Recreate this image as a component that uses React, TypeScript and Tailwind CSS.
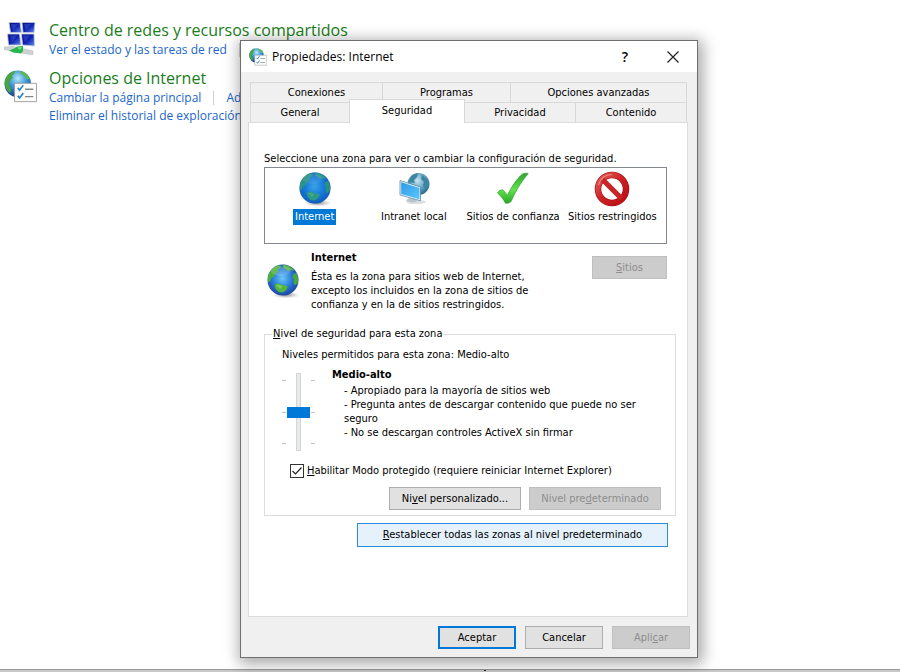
import { useState } from "react";
import type { ReactNode } from "react";
import clsx from "clsx";

type Zone = { id: string; label: string; icon: ReactNode };

const topTabs = [
  { label: "Conexiones", width: "w-[132px]" },
  { label: "Programas", width: "w-32" },
  { label: "Opciones avanzadas", width: "flex-1" },
];

const zones: Zone[] = [
  { id: "internet", label: "Internet", icon: <GlobeIcon id="zone" className="size-9" selected /> },
  { id: "intranet", label: "Intranet local", icon: <IntranetIcon /> },
  { id: "trusted", label: "Sitios de confianza", icon: <CheckIcon /> },
  { id: "restricted", label: "Sitios restringidos", icon: <ForbiddenIcon /> },
];

const levels = [
  "- Apropiado para la mayoría de sitios web",
  "- Pregunta antes de descargar contenido que puede no ser seguro",
  "- No se descargan controles ActiveX sin firmar",
];

function App() {
  return (
    <main className="relative flex min-h-screen flex-col overflow-hidden bg-white">
      <ControlPanel />
      <PropertiesDialog />
      <div className="mt-auto h-[3px] border-t border-[#999] bg-[#c8c8c8] pl-[484px]">
        <div className="h-px w-0.5 bg-[#333]" />
      </div>
    </main>
  );
}

function ControlPanel() {
  return (
    <section className="flex flex-col gap-[9px] pt-5 pl-1 font-['Open_Sans','Noto_Sans',sans-serif] text-[12px] leading-[18px] whitespace-nowrap text-[#1a66cc]">
      <div className="flex gap-3">
        <NetworkIcon />
        <div>
          <h2 className="text-[16px] leading-[21px] text-[#1a7d1a]">
            <a href="#">Centro de redes y recursos compartidos</a>
          </h2>
          <div className="flex items-center gap-3">
            <a href="#">Ver el estado y las tareas de red</a>
            <span className="h-3.5 w-px bg-[#d0d0d0]" />
          </div>
        </div>
      </div>
      <div className="flex gap-3">
        <OptionsIcon className="mt-0.5 size-[33px]" id="panel" />
        <div>
          <h2 className="text-[16px] leading-[21px] text-[#1a7d1a]">
            <a href="#">Opciones de Internet</a>
          </h2>
          <div className="flex items-center gap-3">
            <a href="#">Cambiar la página principal</a>
            <span className="h-3.5 w-px bg-[#d0d0d0]" />
            <a href="#">Admin</a>
          </div>
          <a href="#">Eliminar el historial de exploración</a>
        </div>
      </div>
    </section>
  );
}

function PropertiesDialog() {
  return (
    <div
      role="dialog"
      aria-labelledby="dialog-title"
      className="absolute top-10 left-60 w-full max-w-[458px] border border-[#6e6e6e] bg-[#f0f0f0] font-['DejaVu_Sans_Condensed','DejaVu_Sans',sans-serif] text-[11px] leading-[14px] text-black shadow-[2px_3px_14px_3px_rgba(0,0,0,0.34)]"
    >
      <header className="flex h-[31px] items-center bg-white pl-2">
        <OptionsIcon className="size-[18px]" id="title" />
        <h1 id="dialog-title" className="ml-[5px] flex-1 font-['Open_Sans','Noto_Sans',sans-serif] text-[12px]">
          Propiedades: Internet
        </h1>
        <button aria-label="Ayuda" className="w-12 font-['Open_Sans',sans-serif] text-[14px] font-semibold">
          ?
        </button>
        <button aria-label="Cerrar" className="flex w-12 justify-center">
          <svg viewBox="0 0 12 12" className="size-3" stroke="#222" strokeWidth="1.2">
            <path d="M.5.5l11 11M11.5.5l-11 11" />
          </svg>
        </button>
      </header>
      <div className="pt-2.5 pr-[9px] pb-2 pl-[7px]">
        <Tabs />
        <SecurityPanel />
        <footer className="mt-[9px] -mr-0.5 flex justify-end gap-[9px]">
          <DialogButton className="w-[78px] outline-2 -outline-offset-2 outline-[#0078d7]">Aceptar</DialogButton>
          <DialogButton className="w-[78px]">Cancelar</DialogButton>
          <DialogButton className="w-[78px]" disabled>
            Apli<u>c</u>ar
          </DialogButton>
        </footer>
      </div>
    </div>
  );
}

function Tabs() {
  return (
    <div role="tablist" className="pr-px pl-0.5">
      <div className="flex h-5 border-t border-l border-[#d9d9d9]">
        {topTabs.map(({ label, width }) => (
          <button key={label} role="tab" className={clsx("border-r border-[#d9d9d9]", width)}>
            {label}
          </button>
        ))}
      </div>
      <div className="flex h-5">
        <button role="tab" className="w-[99px] border-t border-l border-[#d9d9d9]">
          General
        </button>
        <button
          role="tab"
          aria-selected="true"
          className="relative -mt-[3px] -mb-px w-[116px] border-x border-t border-[#d9d9d9] bg-white pb-0.5"
        >
          Seguridad
        </button>
        <button role="tab" className="w-[111px] border-t border-r border-[#d9d9d9]">
          Privacidad
        </button>
        <button role="tab" className="flex-1 border-t border-r border-[#d9d9d9]">
          Contenido
        </button>
      </div>
    </div>
  );
}

function SecurityPanel() {
  const [zone, setZone] = useState("internet");
  const [level, setLevel] = useState(1);
  const [protectedMode, setProtectedMode] = useState(true);

  return (
    <div role="tabpanel" className="border border-[#dcdcdc] bg-white pt-7 pr-[11px] pb-[69px] pl-[15px]">
      <p className="leading-4">Seleccione una zona para ver o cambiar la configuración de seguridad.</p>
      <div className="mr-[9px] flex h-[77px] items-start border border-[#828790] pr-1">
        {zones.map(({ id, label, icon }) => (
          <button
            key={id}
            onClick={() => setZone(id)}
            className="flex flex-1 basis-0 flex-col items-center pt-[3px] whitespace-nowrap"
          >
            {icon}
            <span className={clsx("mt-0.5 px-0.5 leading-4", zone === id && "bg-[#0078d7] text-white")}>{label}</span>
          </button>
        ))}
      </div>

      <div className="mt-[7px] mr-[9px] flex">
        <GlobeIcon id="current" className="mt-3 ml-px size-9" />
        <div className="ml-2.5 flex-1">
          <h2 className="font-bold">Internet</h2>
          <p className="mt-[5px] max-w-60">
            Ésta es la zona para sitios web de Internet, excepto los incluidos en la zona de sitios de confianza y en
            la de sitios restringidos.
          </p>
        </div>
        <DialogButton className="mt-[5px] w-[75px] self-start" disabled>
          <u>S</u>itios
        </DialogButton>
      </div>

      <fieldset className="mt-[15px] border border-[#dcdcdc] pr-3.5 pb-[5px] pl-[17px]">
        <legend className="-ml-2.5 px-px">
          <u>N</u>ivel de seguridad para esta zona
        </legend>
        <p className="mt-[7px]">Niveles permitidos para esta zona: Medio-alto</p>
        <div className="mt-1.5 flex">
          <div className="mt-[5px] flex h-[78px] w-[33px] justify-between">
            <Ticks />
            <input
              type="range"
              aria-label="Nivel de seguridad"
              min={0}
              max={2}
              value={level}
              onChange={(e) => setLevel(Number(e.currentTarget.value))}
              className="h-[78px] w-[23px] appearance-none bg-transparent [direction:rtl] [writing-mode:vertical-lr] [&::-webkit-slider-runnable-track]:w-[5px] [&::-webkit-slider-runnable-track]:border [&::-webkit-slider-runnable-track]:border-[#d6d6d6] [&::-webkit-slider-runnable-track]:bg-[#e7eaea] [&::-webkit-slider-thumb]:-ml-[10px] [&::-webkit-slider-thumb]:h-[11px] [&::-webkit-slider-thumb]:w-[23px] [&::-webkit-slider-thumb]:appearance-none [&::-webkit-slider-thumb]:bg-[#0078d7]"
            />
            <Ticks />
          </div>
          <div className="ml-[17px] flex-1">
            <h3 className="font-bold">Medio-alto</h3>
            <ul className="mt-[2px] ml-3">
              {levels.map((text) => (
                <li key={text}>{text}</li>
              ))}
            </ul>
          </div>
        </div>
        <div className="mt-[13px] ml-2 flex items-center gap-[3px]">
          <span className="relative flex size-3.5">
            <input
              id="protected-mode"
              type="checkbox"
              checked={protectedMode}
              onChange={(e) => setProtectedMode(e.currentTarget.checked)}
              className="peer size-3.5 appearance-none border border-[#333] bg-white"
            />
            <svg
              viewBox="0 0 14 14"
              className="pointer-events-none absolute inset-0 hidden size-3.5 peer-checked:block"
              fill="none"
              stroke="#222"
              strokeWidth="1.2"
            >
              <path d="M2.500 7l3 3L11.500 3.500" />
            </svg>
          </span>
          <label htmlFor="protected-mode">
            <u>H</u>abilitar Modo protegido (requiere reiniciar Internet Explorer)
          </label>
        </div>
        <div className="mt-[9px] flex justify-end gap-2">
          <DialogButton className="w-[132px]">
            Ni<u>v</u>el personalizado...
          </DialogButton>
          <DialogButton className="w-[132px]" disabled>
            Nivel pre<u>d</u>eterminado
          </DialogButton>
        </div>
      </fieldset>
      <div className="mt-[7px] mr-2 flex justify-end">
        <button className="h-6 w-[311px] border border-[#2f8ad8] bg-[#e5f1fb]">
          <u>R</u>establecer todas las zonas al nivel predeterminado
        </button>
      </div>
    </div>
  );
}

function Ticks() {
  return (
    <div className="flex flex-col justify-between py-[7px]">
      <span className="h-px w-1 bg-[#c4c4c4]" />
      <span className="h-px w-1 bg-[#c4c4c4]" />
      <span className="h-px w-1 bg-[#c4c4c4]" />
    </div>
  );
}

function DialogButton({
  children,
  className,
  disabled,
}: {
  children: ReactNode;
  className?: string;
  disabled?: boolean;
}) {
  return (
    <button
      disabled={disabled}
      className={clsx(
        "h-[23px] border whitespace-nowrap",
        disabled ? "border-[#bfbfbf] bg-[#cccccc] text-[#8e8e8e]" : "border-[#adadad] bg-[#e1e1e1]",
        className,
      )}
    >
      {children}
    </button>
  );
}

function GlobeIcon({ id, className, selected }: { id: string; className?: string; selected?: boolean }) {
  return (
    <svg viewBox="0 0 36 36" className={className}>
      <defs>
        <radialGradient id={`sea-${id}`} cx=".48" cy=".45" r=".58">
          <stop offset="0" stopColor="#6cc6f5" />
          <stop offset=".5" stopColor="#2b80dc" />
          <stop offset="1" stopColor="#1a3f9e" />
        </radialGradient>
        <radialGradient id={`shade-${id}`}>
          <stop offset="0" stopColor="#555" stopOpacity=".7" />
          <stop offset="1" stopColor="#999" stopOpacity="0" />
        </radialGradient>
      </defs>
      <ellipse cx="21" cy="32" rx="14" ry="3.5" fill={`url(#shade-${id})`} />
      <circle cx="18" cy="17" r="15.5" fill={`url(#sea-${id})`} />
      <path
        d="M3 14C4 8.500 8 4 13 2.300l3 .7-1 2.500-2.500 1 1 2.500-3.500 2-1 3-2.500.5-1 3.500-2.500 1.500z"
        fill="#4cae3c"
      />
      <path d="M18 1.500l6 1.500 4 3 .5 2-3.500-1-2 1.500-2-2.500-2.500-1z" fill="#56b548" />
      <path d="M28.500 11l3-1 1.700 5-.4 5-2.800 2.500-1.500-3 .5-3-1.500-2.500z" fill="#48a83c" />
      <path d="M9.500 21.500l4-1.300 4 1.800 5.300 1.300-1.200 3.500-4 2.700-4-.5-3-3z" fill="#52b53e" />
      <path d="M11 22l3-.3 3.500 1.800-2.500 2.500z" fill="#9ade66" opacity=".6" />
      <ellipse cx="16" cy="8" rx="10" ry="5" fill="#fff" opacity=".16" />
      {selected && <circle cx="18" cy="17" r="15.5" fill="#0078d7" opacity=".45" />}
    </svg>
  );
}

function OptionsIcon({ id, className }: { id: string; className?: string }) {
  return (
    <svg viewBox="0 0 36 36" className={className}>
      <defs>
        <radialGradient id={`opt-${id}`} cx=".5" cy=".3" r=".65">
          <stop offset="0" stopColor="#b5e8fb" />
          <stop offset=".5" stopColor="#3f98da" />
          <stop offset="1" stopColor="#1d4c9c" />
        </radialGradient>
      </defs>
      <circle cx="15" cy="15" r="14.5" fill={`url(#opt-${id})`} />
      <path d="M.8 14C1.500 7 6 1.800 12 .8L11 4 8.500 6l1 2.500L6.500 12l-1 4 2 4-.5 5.500C3 23 .8 18 .8 14z" fill="#4aa53e" />
      <path d="M17 .8c5 .7 9 3.700 11.500 8.700l-4 .5-2-4-4-1.500z" fill="#5dbb4a" />
      <path d="M11.500 14.500h24v20h-24z" fill="#fdfdfd" stroke="#9a9a9a" />
      <path d="M15 19.500l2 2.500 4-5.500M15 28l2 2.500 4-5.500" fill="none" stroke="#2384bd" strokeWidth="1.8" />
      <path d="M23 21h9M23 29h9" stroke="#888" strokeWidth="1.4" />
    </svg>
  );
}

function NetworkIcon() {
  return (
    <svg viewBox="0 0 33 36" className="h-9 w-[33px]">
      <defs>
        <linearGradient id="screen" x1="0" y1="0" x2="1" y2="1">
          <stop offset="0" stopColor="#0a0f86" />
          <stop offset=".5" stopColor="#1020b0" />
          <stop offset="1" stopColor="#5f8eee" />
        </linearGradient>
      </defs>
      <g fill="url(#screen)" stroke="#c2cad8" strokeWidth=".8">
        <path d="M5 2.500h11l1.500 10h-11z" />
        <path d="M18 2.500h13l-1 10H19z" />
        <path d="M3.500 14h12l1.500 11H4.500z" />
        <path d="M17.500 14h12.500l.5 12-12-1z" />
      </g>
      <path d="M7 4l7 0-5 7zM20 4l7 0-5 7zM6 15.500h7l-5 7zM19 15.500h7l-5 7z" fill="#3c60d8" opacity=".45" />
      <path d="M0 27l9-.5 20 4.500v3.500l-6-.5L0 29.500z" fill="#cfd3d3" stroke="#adb3b3" strokeWidth=".5" />
      <path d="M5 30.500l6-2.500 2-1.500 6-.5v5l-2 2.500-8-1z" fill="#27b64b" />
      <path d="M13 27.500l5-.5-2 3z" fill="#7be08a" />
    </svg>
  );
}

function IntranetIcon() {
  return (
    <svg viewBox="0 0 36 36" className="size-9">
      <defs>
        <radialGradient id="intranet-globe" cx=".45" cy=".35" r=".65">
          <stop offset="0" stopColor="#c9e6f0" />
          <stop offset=".6" stopColor="#5c9fc0" />
          <stop offset="1" stopColor="#2e6585" />
        </radialGradient>
        <linearGradient id="intranet-screen" x1="0" y1="0" x2="1" y2="1">
          <stop offset="0" stopColor="#2c9be8" />
          <stop offset="1" stopColor="#5cc5fa" />
        </linearGradient>
      </defs>
      <ellipse cx="20" cy="31" rx="10" ry="2" fill="#bbb" opacity=".5" />
      <circle cx="22.500" cy="13" r="11" fill="url(#intranet-globe)" />
      <path d="M12 11l4-7 6-2-1 4-3 3 1 3zM26 4l5 4 2 6-3 5-3-4 1-4-3-3z" fill="#3e84a3" />
      <path d="M13 27l7 1.500 1 2-6 1-5-2z" fill="#b9c2c8" />
      <path d="M4 9.500L24.500 16v13.800L4 24z" fill="#e2f2fa" stroke="#4a7c9d" strokeWidth=".7" />
      <path d="M5.200 11.200L23.500 17v11.300L5.200 23z" fill="url(#intranet-screen)" />
    </svg>
  );
}

function CheckIcon() {
  return (
    <svg viewBox="0 0 36 36" className="size-9">
      <defs>
        <linearGradient id="check" x1="0" y1="0" x2="0" y2="1">
          <stop offset="0" stopColor="#2ea42c" />
          <stop offset=".55" stopColor="#63e34b" />
          <stop offset="1" stopColor="#29a727" />
        </linearGradient>
      </defs>
      <path
        d="M2.500 22C3.500 20 5.500 18.800 7.500 18.800c2 1.500 3.500 3.500 4.800 5.700C16.500 16 21.500 8 27.500 3c2-1 4-1 5.700-.5C26 11 20.500 20 16 30.500c-1.500 1.500-3.500 2-5.500 1.700C8.500 28.500 6 25 2.500 22z"
        fill="url(#check)"
        stroke="#2ba12b"
        strokeWidth=".7"
      />
    </svg>
  );
}

function ForbiddenIcon() {
  return (
    <svg viewBox="0 0 36 36" className="size-9">
      <defs>
        <linearGradient id="forbidden" x1="0" y1="0" x2="1" y2="1">
          <stop offset="0" stopColor="#e35a55" />
          <stop offset=".5" stopColor="#cc2023" />
          <stop offset="1" stopColor="#b80f14" />
        </linearGradient>
      </defs>
      <circle cx="18" cy="18" r="14" fill="#fff" stroke="#9c1217" strokeWidth="6.500" />
      <circle cx="18" cy="18" r="14" fill="none" stroke="url(#forbidden)" strokeWidth="5.300" />
      <path d="M8.500 8.500l19 19" stroke="#cb2427" strokeWidth="5.300" />
      <path d="M4.500 14C6.500 7.500 11.500 3.500 18 3.500" fill="none" stroke="#f4a5a0" strokeWidth="1.200" opacity=".7" />
    </svg>
  );
}

export default App;
